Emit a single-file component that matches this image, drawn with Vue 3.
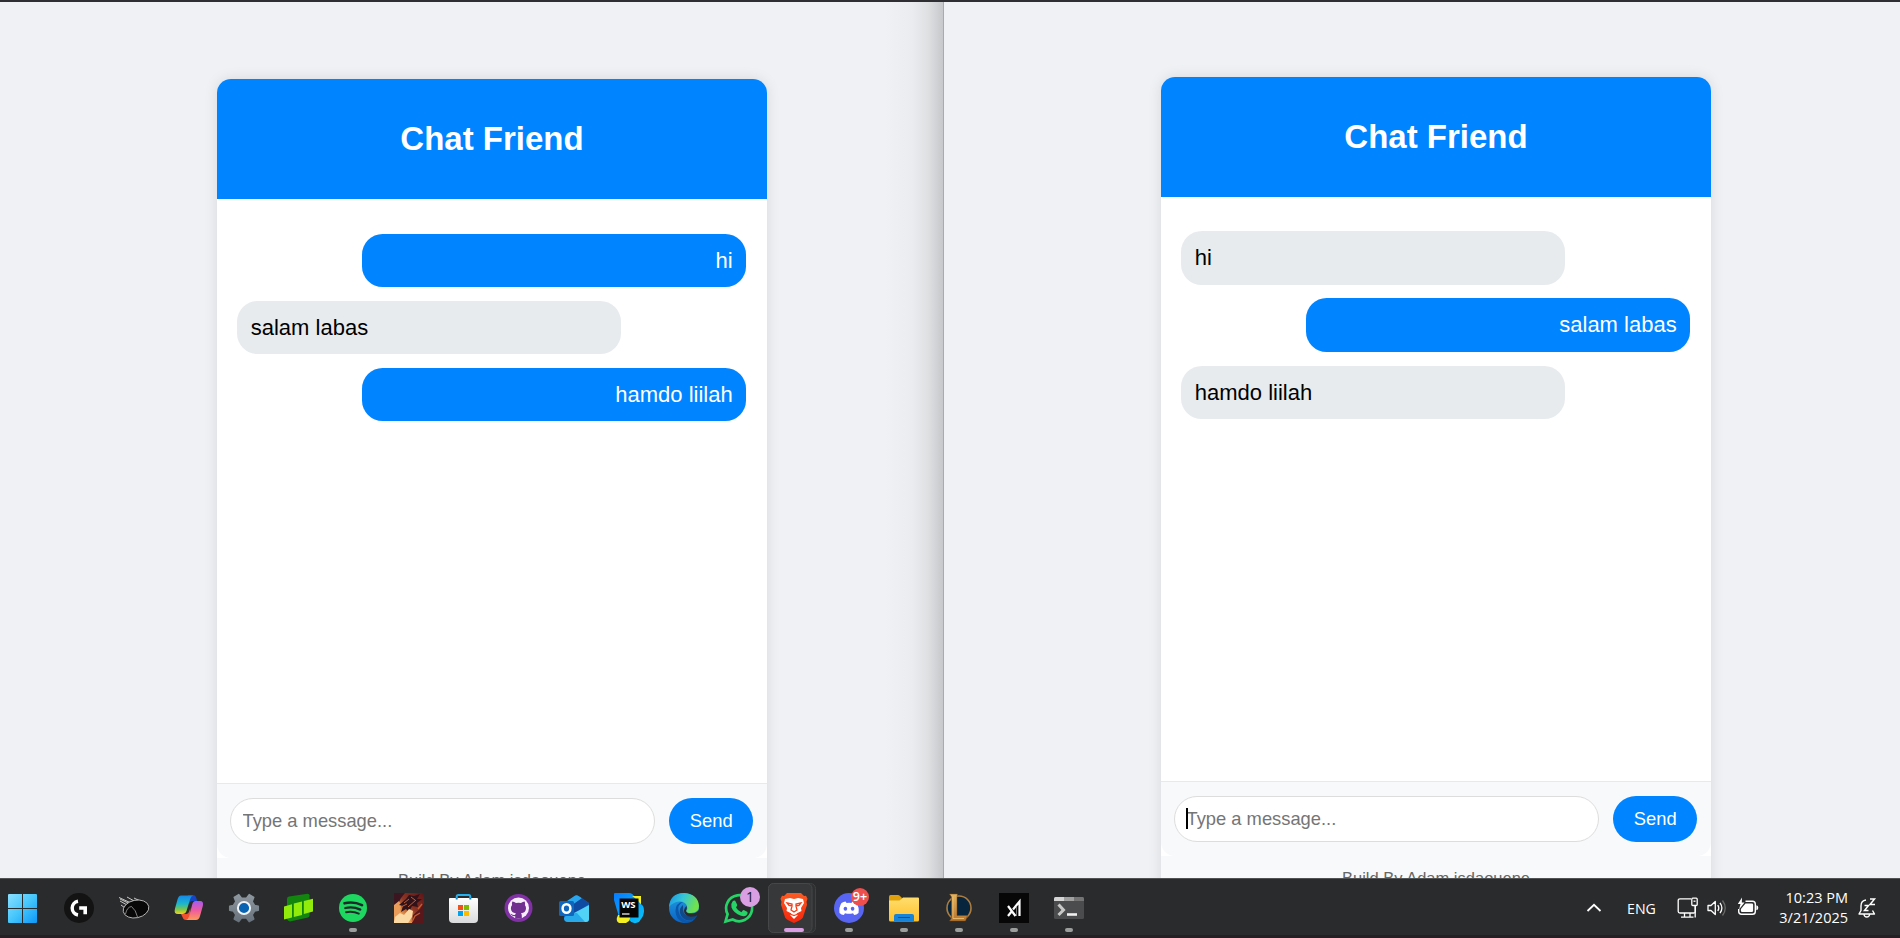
<script setup>
const windows = [
  {
    id: 'left',
    focused: false,
    messages: [
      { text: 'hi', mine: true },
      { text: 'salam labas', mine: false },
      { text: 'hamdo liilah', mine: true },
    ],
  },
  {
    id: 'right',
    focused: true,
    messages: [
      { text: 'hi', mine: false },
      { text: 'salam labas', mine: true },
      { text: 'hamdo liilah', mine: false },
    ],
  },
]
</script>

<template>
  <div class="desktop">
    <main class="windows">
      <section v-for="w in windows" :key="w.id" class="window" :class="w.id">
        <div class="card">
          <header class="head"><h1>Chat Friend</h1></header>
          <div class="chat">
            <div
              v-for="m in w.messages"
              :key="m.text"
              class="bubble"
              :class="{ mine: m.mine }"
            >{{ m.text }}</div>
          </div>
          <div class="composer">
            <div class="field">
              <input type="text" placeholder="Type a message..." />
              <span v-if="w.focused" class="caret"></span>
            </div>
            <button type="button">Send</button>
          </div>
          <footer>Build By Adam isdaouene</footer>
        </div>
      </section>
    </main>

    <nav class="taskbar">
      <svg class="start" viewBox="0 0 52 60">
        <defs>
          <linearGradient id="win" x1="8" y1="16" x2="37" y2="45" gradientUnits="userSpaceOnUse">
            <stop offset="0" stop-color="#8be0ff" /><stop offset=".5" stop-color="#45c6fb" /><stop offset="1" stop-color="#0d97f8" />
          </linearGradient>
        </defs>
        <path fill="url(#win)" d="M9 16h13v14H8V17q0-1 1-1zM23 16h13q1 0 1 1v13H23zM8 31h14v14H9q-1 0-1-1zM23 31h14v13q0 1-1 1H23z" />
      </svg>

      <!-- Logitech G -->
      <svg class="app" viewBox="-12 -15 55 60">
        <circle cx="15" cy="15" r="15" fill="#131314" />
        <path d="M14 8.200A7 7 0 0 0 14 22" fill="none" stroke="#fff" stroke-width="3.400" />
        <path d="M15.200 13.200h7.800v8h-3.600v-4.400h-4.200z" fill="#fff" />
      </svg>

      <!-- Comet -->
      <svg class="app" viewBox="-12 -15 55 60">
        <path d="M0 4.500 12 10M1 8 8 12M8 4l9 5M15 5l6 3M2 12l4 3M1 6l8 4M18 7l5 1" stroke="#c8c8c8" stroke-width="1" />
        <ellipse cx="17" cy="16" rx="13" ry="8.800" transform="rotate(-12 17 16)" fill="#080808" stroke="#b8b8b8" stroke-width=".9" />
        <path d="M6.500 21Q8 14 12.500 13.500 17 17 18.500 24" fill="none" stroke="#a0a0a0" stroke-width=".8" />
      </svg>

      <!-- Copilot -->
      <svg class="app" viewBox="-12 -15 55 60">
        <defs>
          <linearGradient id="cpA" x1="0" y1="0" x2="0" y2="1"><stop offset="0" stop-color="#1688e8" /><stop offset=".45" stop-color="#1cb6cf" /><stop offset=".75" stop-color="#7cc64a" /><stop offset="1" stop-color="#f5d21c" /></linearGradient>
          <linearGradient id="cpB" x1="0" y1="0" x2="0" y2="1"><stop offset="0" stop-color="#a45af0" /><stop offset=".5" stop-color="#ee5b9f" /><stop offset="1" stop-color="#ff9a59" /></linearGradient>
        </defs>
        <path d="M14 2h5q2.500 0 3.300 3l1 3h-5q-2.500 0-3.300 3z" fill="#1745c4" />
        <path d="M7 2.500h12q-2 .5-3 4l-3.500 11.500q-1 3-4 3H4q-4.500 0-3-5.500L3.500 6.500Q4.600 2.500 7 2.500z" fill="url(#cpA)" />
        <path d="M7 21h5q2.500 0 3.300-3l1-3 0 9-2 3h-2.500q-2.500 0-3.300-3z" fill="#ee5030" />
        <path d="M21.500 8h4.500q4 0 2.800 5L26 23q-1 4-4 4H12q2.300-.5 3.200-4l3-11.500Q19 8 21.500 8z" fill="url(#cpB)" />
      </svg>

      <!-- Settings -->
      <svg class="app" viewBox="-12 -15 55 60">
        <defs><linearGradient id="gear" x1="0" y1="0" x2="0" y2="1"><stop offset="0" stop-color="#8e979f" /><stop offset="1" stop-color="#68727c" /></linearGradient></defs>
        <path fill="url(#gear)" stroke="url(#gear)" stroke-width="1.500" stroke-linejoin="round" d="M9.800 1.600 12.500 5.300h5L20.200 1.600 24.800 4.300 23.200 8.600 25.600 12.400 29.300 13.200V17.200L25.600 18 23.200 21.800 24.800 26 20.200 28.600 17.500 25h-5L9.800 28.600 5.200 26 6.800 21.800 4.400 18 .7 17.200V13.200L4.400 12.400 6.800 8.600 5.200 4.300z" />
        <circle cx="15" cy="15" r="6.100" fill="#0863b3" stroke="#f1f4f6" stroke-width="2" />
      </svg>

      <!-- GPU panels -->
      <svg class="app" viewBox="-12 -15 55 60">
        <path d="M3 6Q3 4 5 3.600L23.500 .8q2 0 2 1.500v20.500Q25.500 24 24 24.500L6 28.500Q4 28 3 26z" fill="#12850f" />
        <path d="M0 13.500 8 11.200V24.500L0 26.500zM9.800 10.500 18 8.500V22L9.800 24zM19.800 8 29 5.800V18.500l-9.200 2.500z" fill="#91eb0b" />
      </svg>

      <!-- Spotify -->
      <svg class="app" viewBox="-12 -15 55 60">
        <circle cx="14" cy="15" r="14" fill="#1ed760" />
        <g fill="none" stroke="#20292a" stroke-linecap="round"><path d="M5.500 10.300q9-2.200 17.500 1.800" stroke-width="2.700" /><path d="M6.300 15q8-1.800 15 1.600" stroke-width="2.300" /><path d="M7 19.200q7-1.300 12.800 1.500" stroke-width="1.900" /></g>
        <rect class="dot" x="10" y="35" width="8" height="4" rx="2" />
      </svg>

      <!-- Game artwork -->
      <svg class="app" viewBox="-12 -15 55 60">
        <defs><linearGradient id="art" x1="1" y1="0" x2="0" y2="1"><stop offset="0" stop-color="#5b1518" /><stop offset=".45" stop-color="#8e3524" /><stop offset=".72" stop-color="#e99a50" /><stop offset="1" stop-color="#ffe6b0" /></linearGradient></defs>
        <rect width="30" height="30" fill="url(#art)" />
        <path d="M0 0h11L7 5l-4 8-3 3z" fill="#3b1520" />
        <path d="M0 12l5-4 2 4-1 6 3 4-5 4-4 2z" fill="#e99d58" />
        <path d="M5 12 12 6l3-4 5 1 6-2-3 5 5 0-5 4 1 4-6-1-3 6-3-3-5 3 2-6z" fill="#30121a" />
        <path d="M10 10l5-4M14 14l8-7M17 4l4 3M7 14l6-3" stroke="#b9603e" stroke-width="1" />
        <path d="M0 30 1 24l5-4 4 2 5-6 4 2-1 6-4 6z" fill="#fbd9a4" />
        <path d="M18 30l1-8 7-6 4-6v20z" fill="#59171b" /><path d="M18 29l3-6 5-3M24 16l4-5" stroke="#c55d32" stroke-width="1.300" fill="none" />
      </svg>

      <!-- Store -->
      <svg class="app" viewBox="-12 -15 55 60">
        <defs><linearGradient id="bag" x1="0" y1="0" x2="0" y2="1"><stop offset="0" stop-color="#fff" /><stop offset="1" stop-color="#d9dadb" /></linearGradient></defs>
        <path d="M7.700 7V3.500Q7.700 2 9.200 2h10.600q1.500 0 1.500 1.500V7" fill="none" stroke="#25b0ee" stroke-width="2" />
        <path d="M0 6q0-1 1-1H28q1 0 1 1v20q0 4-4 4H4q-4 0-4-4z" fill="url(#bag)" />
        <path d="M7.700 5v1.500M21.300 5v1.500" stroke="#1482bd" stroke-width="2" />
        <path d="M9 12h5v5h-5z" fill="#f1511b" /><path d="M15 12h5v5h-5z" fill="#80bb01" /><path d="M9 18h5v5h-5z" fill="#00a3ee" /><path d="M15 18h5v5h-5z" fill="#fcba00" />
      </svg>

      <!-- GitHub -->
      <svg class="app" viewBox="-12 -15 55 60">
        <circle cx="14.500" cy="15" r="14" fill="#8131a5" />
        <circle cx="14.500" cy="15" r="10.500" fill="#f6effa" />
        <path d="M8.300 8.500q2 0 3.700 1.500 2.500-.6 5 0 1.700-1.500 3.700-1.500.7 2 .2 3.500 1.300 1.600 1.100 3.700-.4 4-5 4.600.8.900.8 2.500v2.600h-6.600V23q-3.500.7-4.700-2.200l1.100.3q1.500 1.500 3.600.6.100-.8.700-1.400-4.600-.6-5-4.600-.2-2.100 1.200-3.700-.5-1.500.2-3.500z" fill="#71308f" />
      </svg>

      <!-- Outlook -->
      <svg class="app" viewBox="-12 -15 55 60">
        <path d="M5 11 15.500 3q2-1.500 4 0L30 10v16q0 3-3 3H9q-4 0-4-4z" fill="#1266bd" />
        <path d="M5 10 15.500 3q2-1.500 4 0L23 5.200 9 15H5z" fill="#2aa6ef" />
        <path d="M23 5.200 28 8.500q2 1.300 2 2.500L17 20H9v-5z" fill="#104ba3" />
        <path d="M30 12v14q0 3-3 3H9l6-9z" fill="#50d3f7" /><path d="M9 20h9l8 9H9q-4 0-4-4z" fill="#27a9ea" />
        <rect x="0" y="8" width="15" height="15" rx="1.500" fill="#0f67bd" />
        <ellipse cx="7.500" cy="15.500" rx="3.900" ry="4.300" fill="none" stroke="#fff" stroke-width="2.500" />
      </svg>

      <!-- WebStorm -->
      <svg class="app" viewBox="-12 -15 55 60">
        <defs><linearGradient id="ws" x1="0" y1="0" x2="1" y2="1"><stop offset="0" stop-color="#087bff" /><stop offset="1" stop-color="#07c6f7" /></linearGradient></defs>
        <path d="M14 4 27 3v10l-13 6z" fill="#f4ef20" />
        <path d="M1 0h14q4 0 6 5l8 8q2 4 0 10l-4 6q-6 3-10-2L5 24 0 7V1q0-1 1-1z" fill="url(#ws)" />
        <path d="M18 3h9v8l-3-4z" fill="#f4ef20" />
        <path d="M4 22H17l-2 6-3 2H5q-4-2-1-8z" fill="#f4ef20" />
        <rect x="5.500" y="5.500" width="19" height="19" fill="#050505" />
        <text x="7.200" y="14.500" class="ws">WS</text><path d="M8 21h7.500" stroke="#fff" stroke-width="1.200" />
      </svg>

      <!-- Edge -->
      <svg class="app" viewBox="-12 -15 55 60">
        <defs>
          <linearGradient id="edA" x1="0" y1="0" x2="1" y2=".3"><stop offset="0" stop-color="#1794e5" /><stop offset=".5" stop-color="#36c5d8" /><stop offset="1" stop-color="#70e34b" /></linearGradient>
          <linearGradient id="edB" x1="0" y1="0" x2="0" y2="1"><stop offset="0" stop-color="#229fe2" /><stop offset="1" stop-color="#0b63c4" /></linearGradient>
        </defs>
        <circle cx="15" cy="15" r="15" fill="url(#edB)" />
        <path d="M0 14Q1 0 15 0q14 1 15 13 0 7-8 7-5 0-5-2 2-2 1-5-2-5-8-4.500Q4 9 0 14z" fill="url(#edA)" />
        <path d="M14 9q-6 3-4.500 9Q11 26 19 28q4 .5 8.500-4.500-3 6-10 6.500Q9 29 7 21.500 5 13 11 9.500z" fill="#0b57ab" />
        <path d="M14 12q-4 3-3 8 2 7 9 7.500 4 0 7.500-4l.5-1.500q-4 2-9 1-6-2-5-9z" fill="#104a8b" />
        <path d="M17.500 13q1 2-.5 5 1 3 6 2.500 4 0 7-3.500l.5 1-1.500 4q-4 2.500-9 1.500-5-2-5-6 .3-2.500 2.500-4.500z" fill="#2a2b2c" />
      </svg>

      <!-- WhatsApp -->
      <svg class="app" viewBox="-12 -15 55 60">
        <path d="M1.500 28.500 3.600 21.200A13 13 0 1 1 8.700 26.500z" fill="none" stroke="#25d366" stroke-width="2.700" />
        <path d="M8.500 8.500q1.500-1.500 2.700-.7l2 4q.3.700-1.200 2.600 2 3.500 5.400 4.800 1.600-2.300 2.400-2.100l3.700 1.900q.5 1.300-.8 3-2 2-5.700.8Q9.500 20 7.500 14.500q-1-3.700 1-6z" fill="#25d366" />
        <circle cx="26" cy="4" r="10" fill="#d99fe2" />
        <text x="26" y="9" class="badge" text-anchor="middle">1</text>
      </svg>

      <!-- Brave -->
      <svg class="app active-app" viewBox="-12 -15 55 60">
        <defs><linearGradient id="br" x1="0" y1="0" x2="0" y2="1"><stop offset="0" stop-color="#fb5b22" /><stop offset="1" stop-color="#f5250d" /></linearGradient></defs>
        <rect x="-10.500" y="-9.500" width="47" height="49" rx="5" fill="#2f3031" stroke="#3f4041" />
        <rect x="-10.500" y="-9.500" width="43.500" height="49" rx="5" fill="#373839" stroke="#464748" />
        <path d="M8 0h14l3 3 2-.2 1.500 3-1 3 .5 3-4.200 13Q22 27 15 30 8 27 6.200 24.800L2 11.800l.5-3-1-3 1.500-3 2 .2z" fill="url(#br)" />
        <path d="M6 6 11 5l4 1 4-1 5 1 1 4-3 5 .5 3-5 2.500 1.500 1.500-4 4-4-4 1.500-1.500-5-2.500.5-3-3-5z" fill="#fff" />
        <path d="M8 10l5 1v2l-3-.5zM22 10l-5 1v2l3-.5zM13 13l-1 4 3 2 3-2-1-4M11 21l4 1.500 4-1.500" fill="none" stroke="#f93c16" stroke-width="1.300" />
        <rect x="5" y="35" width="20" height="4" rx="2" fill="#d99fe2" />
      </svg>

      <!-- Discord -->
      <svg class="app" viewBox="-12 -15 55 60">
        <circle cx="15" cy="15" r="15" fill="#5865f2" />
        <path d="M11.500 8.500 12.600 10q2.400-.4 4.800 0l1.100-1.500q2 .3 4 1.400 3 4.500 2 10-2 1.700-4.300 2.100L19 20.200q-4 1-8 0L9.800 22q-2.300-.4-4.300-2.100-.9-5.500 2-10 2-1.100 4-1.400z" fill="#fff" />
        <ellipse cx="11.400" cy="15.800" rx="1.800" ry="2" fill="#5865f2" /><ellipse cx="18.600" cy="15.800" rx="1.800" ry="2" fill="#5865f2" />
        <circle cx="26" cy="4" r="9" fill="#ed4f4f" />
        <text x="26" y="8" class="nine" text-anchor="middle">9+</text>
        <rect class="dot" x="11" y="35" width="8" height="4" rx="2" />
      </svg>

      <!-- File Explorer -->
      <svg class="app" viewBox="-12 -15 55 60">
        <defs><linearGradient id="fo" x1="0" y1="0" x2="0" y2="1"><stop offset="0" stop-color="#ffde6c" /><stop offset="1" stop-color="#fdc02c" /></linearGradient></defs>
        <path d="M0 3.500Q0 2 1.500 2H9q1 0 2 1l2 2-2 5H0z" fill="#dfa009" />
        <path d="M0 7.500h10.500L14 4.500h15q1 0 1 1V27q0 1.500-1.500 1.500h-27Q0 28.500 0 27z" fill="url(#fo)" />
        <path d="M5 28.500V23q0-2 2-2h16q2 0 2 2v5.500z" fill="#1683d8" /><path d="M9.500 24.500h11" stroke="#0b4f93" stroke-width="1.200" stroke-linecap="round" />
        <rect class="dot" x="11" y="35" width="8" height="4" rx="2" />
      </svg>

      <!-- League of Legends -->
      <svg class="app" viewBox="-12 -15 55 60">
        <defs><linearGradient id="lol" x1="0" y1="0" x2="0" y2="1"><stop offset="0" stop-color="#e3b45e" /><stop offset="1" stop-color="#b8762f" /></linearGradient></defs>
        <circle cx="15" cy="15" r="12" fill="#07263e" stroke="#ad7d40" stroke-width="1.600" />
        <path d="M5.500 1h8L13 4v18.500h10.500L21.500 28H5.500L7.500 25V4z" fill="url(#lol)" stroke="#71451f" stroke-width=".5" />
        <path d="M9 3.500v22h11" fill="none" stroke="#efc77a" stroke-width=".8" />
        <rect class="dot" x="11" y="35" width="8" height="4" rx="2" />
      </svg>

      <!-- xl -->
      <svg class="app" viewBox="-12 -15 55 60">
        <rect width="30" height="30" fill="#070707" />
        <path d="M9 13 16.500 23M9 23 13 18M14 16.500 20.500 8.500V23" fill="none" stroke="#fff" stroke-width="2.200" />
        <path d="M17.500 13V23" stroke="#b9b9b9" stroke-width=".6" />
        <rect class="dot" x="11" y="35" width="8" height="4" rx="2" />
      </svg>

      <!-- Terminal -->
      <svg class="app" viewBox="-12 -15 55 60">
        <rect y="4" width="30" height="22" rx="1.500" fill="#4b4c4d" />
        <path d="M0 8V5.500Q0 4 1.500 4H10v4z" fill="#d5d5d5" /><path d="M10 4h10v4H10z" fill="#a0a0a0" /><path d="M20 4h8.500Q30 4 30 5.500V8H20z" fill="#747474" />
        <path d="M4.500 11.500 9.500 17l-5 5" fill="none" stroke="#c8c8c8" stroke-width="3" /><path d="M13 21.500h10" stroke="#f0f0f0" stroke-width="2.600" />
        <rect class="dot" x="11" y="35" width="8" height="4" rx="2" />
      </svg>

      <div class="tray">
        <svg class="chevron" viewBox="0 0 16 10"><path d="M1.500 8 8 1.800 14.500 8" fill="none" stroke="#fff" stroke-width="1.800" /></svg>
        <span class="lang">ENG</span>
        <svg class="net" viewBox="0 0 22 22">
          <g fill="none" stroke="#fff" stroke-width="1.300"><path d="M14 1.800H3Q1.200 1.800 1.200 3.500v11Q1.200 16 3 16h14q1.300 0 1.300-1.500V9M7.500 16v4M13 16v4M4 20.200h12.500" /><rect x="14.800" y="1.200" width="5.400" height="7.300" rx="1" /><path d="M18.200 8v12.500" /><path d="M16.500 4.200h2" /></g>
        </svg>
        <svg class="vol" viewBox="0 0 22 22">
          <g fill="none" stroke="#fff" stroke-width="1.300" stroke-linejoin="round"><path d="M2 8.500h3L9.300 4.500v13L5 13.500H2z" /><path d="M11.800 8q2 3 0 6M14 5.800q3.800 5.200 0 10.400" /><path d="M16.500 3.500q5.500 7.500 0 15" stroke="#696969" /></g>
        </svg>
        <svg class="bat" viewBox="0 0 22 22">
          <path d="M8.500 4.200h7Q18.300 4.200 18.300 7v7.500q0 2.800-2.800 2.800H4.500q-2.800 0-2.800-2.800V12" fill="none" stroke="#fff" stroke-width="1.400" />
          <path d="M8.500 6.500h6.300q1.300 0 1.300 1.300v5.900q0 1.300-1.300 1.300H5.200q-1.300 0-1.300-1.300V12z" fill="#fff" /><path d="M19.300 8.300q2 .2 2 2.400t-2 2.500z" fill="#fff" />
          <path d="M5 .5.800 7h2.700L2 12.500l5.500-7H4.800z" fill="#fff" />
        </svg>
        <div class="clock"><span>10:23 PM</span><span>3/21/2025</span></div>
        <svg class="bell" viewBox="0 0 20 22">
          <path d="M9 3Q4 3.500 4 9v4.500L2 17h15.500l-2-3.500M7 17.500q.3 2.500 2.800 2.500t2.800-2.500" fill="none" stroke="#fff" stroke-width="1.400" stroke-linejoin="round" />
          <path d="M7.500 8.500h4l-4 5h4M13 2h4.500l-4.500 5.500H18" fill="none" stroke="#fff" stroke-width="1.500" />
        </svg>
      </div>
    </nav>
  </div>
</template>

<style>
body {
  background: #2a2b2c;
  overflow: hidden;
}
</style>

<style scoped>
.desktop {
  width: 1900px;
  height: 938px;
  display: flex;
  flex-direction: column;
  overflow: hidden;
  font-family: "Liberation Sans", Arial, sans-serif;
}
.windows {
  box-sizing: border-box;
  height: 878px;
  display: grid;
  grid-template-columns: 944px 956px;
  border-top: 2px solid #2f2e33;
  overflow: hidden;
}
.window {
  box-sizing: border-box;
  height: 876px;
  overflow: hidden;
  background: #f0f1f5;
}
.left {
  padding: 77.3px 0 0 217px;
  border-right: 1px solid #a9aaad;
  background: linear-gradient(to right, #f0f1f5 885px, #ebecf0 912px, #dfe0e2 928px, #c7c8cb 943px);
}
.right {
  padding: 75px 0 0 217px;
}
.card {
  width: 550px;
  border-radius: 14px;
  background: #fff;
  box-shadow: 0 0 14px rgba(0, 0, 0, 0.1);
}
.head {
  height: 120px;
  display: flex;
  align-items: center;
  justify-content: center;
  background: #0084ff;
  border-radius: 14px 14px 0 0;
}
h1 {
  margin: 0;
  font-size: 33px;
  line-height: 38px;
  font-weight: 700;
  color: #fff;
}
.chat {
  box-sizing: border-box;
  height: 584px;
  padding: 34.4px 20.6px 0 20px;
  display: flex;
  flex-direction: column;
  align-items: flex-start;
  gap: 13.7px;
}
.bubble {
  box-sizing: border-box;
  width: 384px;
  height: 53.4px;
  padding: 0 13.75px;
  border-radius: 20.6px;
  line-height: 53px;
  font-size: 22px;
  background: #e8ebee;
  color: #000;
}
.bubble.mine {
  align-self: flex-end;
  text-align: right;
  background: #0084ff;
  color: #fff;
}
.composer {
  box-sizing: border-box;
  height: 74.5px;
  padding: 13.75px 13.75px 13.75px 13px;
  border-top: 1px solid #e8e9ea;
  background: #f8f9fa;
  border-radius: 0 0 14px 14px;
  display: flex;
  gap: 14px;
}
.field {
  position: relative;
  flex: 1;
  display: flex;
}
input {
  box-sizing: border-box;
  width: 100%;
  height: 46px;
  padding: 0 11.500px;
  border: 1px solid #dddddd;
  border-radius: 27px;
  outline: none;
  background: #fff;
  font: 18.33px "Liberation Sans", Arial, sans-serif;
}
input::placeholder {
  color: #757575;
}
.caret {
  position: absolute;
  left: 12px;
  top: 12px;
  width: 2px;
  height: 21px;
  background: #000;
}
button {
  width: 84px;
  height: 46px;
  padding: 0;
  border: 0;
  border-radius: 27px;
  background: #0084ff;
  color: #fff;
  font: 18.33px "Liberation Sans", Arial, sans-serif;
}
footer {
  height: 90px;
  padding-top: 13px;
  text-align: center;
  font-size: 16.5px;
  line-height: 19px;
  color: #666;
  background: #f8f9fa;
}
.taskbar {
  box-sizing: border-box;
  height: 60px;
  display: flex;
  background: #2a2b2c;
  box-shadow: inset 0 1px #505253, inset 0 -3px #261e22;
}
.start {
  width: 52px;
  height: 60px;
  flex: none;
}
.app {
  width: 55px;
  height: 60px;
  flex: none;
  overflow: visible;
}
.dot {
  fill: #9c9d9d;
}
.ws {
  font: 700 9.500px "Open Sans", sans-serif;
  fill: #fff;
}
.badge {
  font: 14px "Open Sans", sans-serif;
  fill: #171717;
}
.nine {
  font: 600 12.500px "Open Sans", sans-serif;
  fill: #fff;
}
.tray {
  margin-left: auto;
  padding-right: 23px;
  display: flex;
  align-items: center;
  color: #fff;
  font-family: "Open Sans", "Noto Sans", sans-serif;
}
.chevron {
  width: 16px;
  height: 10px;
  margin-right: 25px;
}
.lang {
  width: 31px;
  margin-right: 19px;
  font-size: 14.2px;
  white-space: nowrap;
}
.net,
.vol,
.bat {
  width: 22px;
  height: 22px;
}
.net {
  margin-right: 7px;
}
.vol {
  margin-right: 9px;
}
.clock {
  width: 89px;
  display: flex;
  flex-direction: column;
  text-align: right;
  font-size: 14.5px;
  line-height: 20px;
}
.bell {
  width: 20px;
  height: 22px;
  margin-left: 9px;
}
</style>
